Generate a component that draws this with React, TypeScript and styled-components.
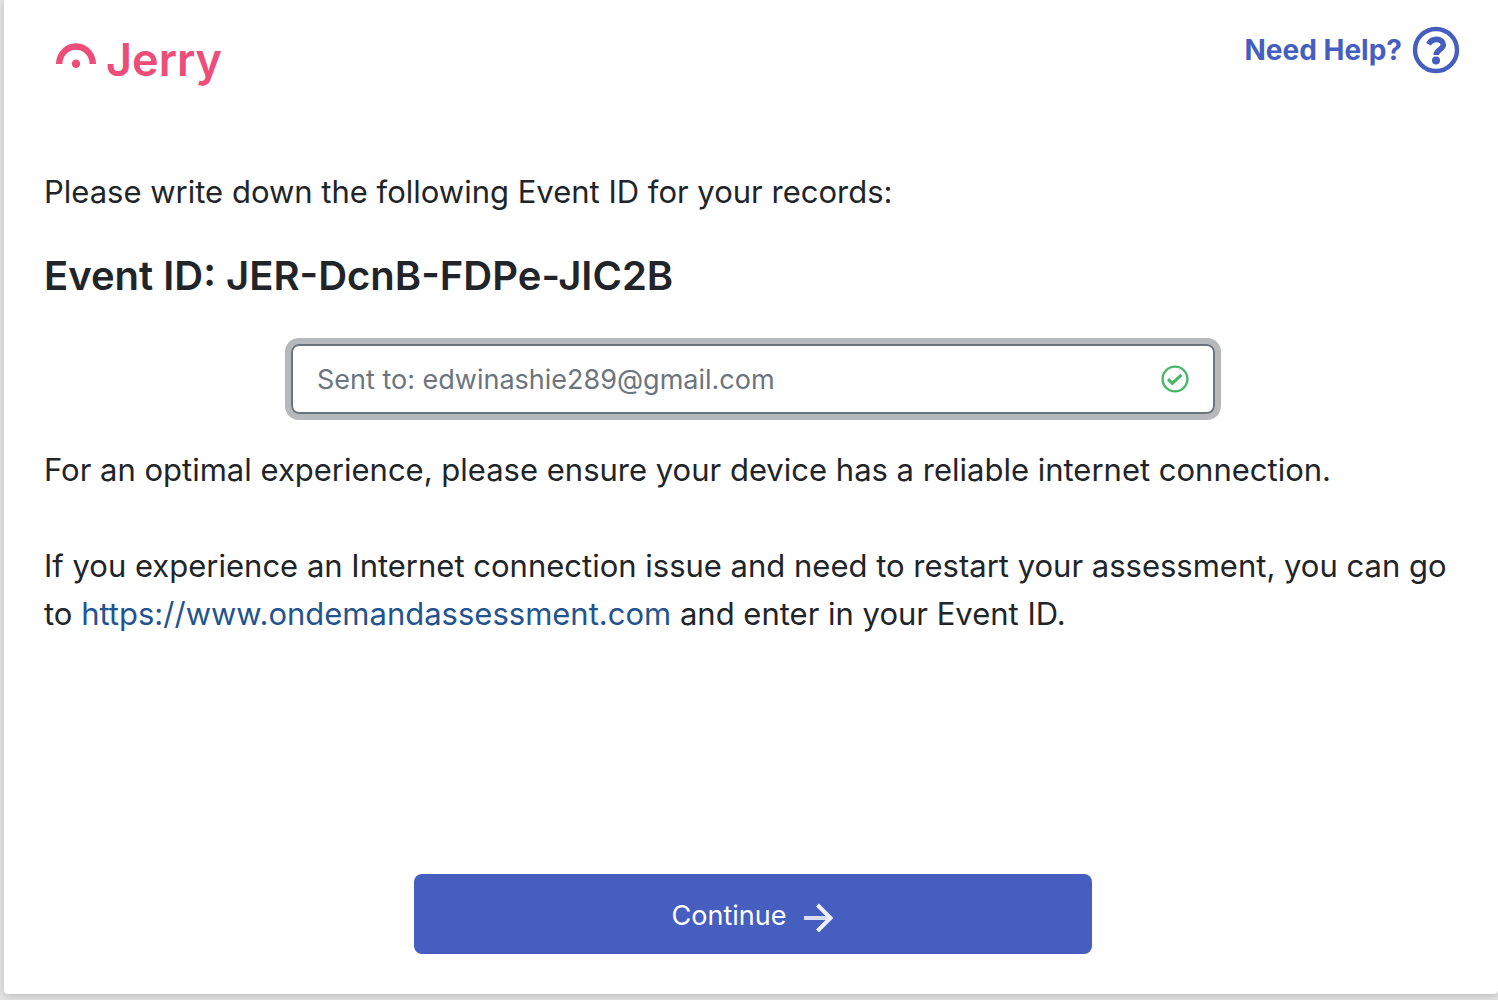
import React from "react";
import styled, { createGlobalStyle } from "styled-components";

const GlobalStyle = createGlobalStyle`
  *, *::before, *::after { box-sizing: border-box; }
  body {
    margin: 0;
    background: #e6e6e6;
    color: #212529;
    font-family: Inter, "Liberation Sans", sans-serif;
    font-size: 31px;
    line-height: 48px;
  }
`;

const Page = styled.div`
  display: flex;
  min-height: 100vh;
  padding: 0 0 6px 4px;
`;

const Card = styled.main`
  display: flex;
  flex: 1;
  flex-direction: column;
  min-width: 0;
  padding: 24px 36px 40px 40px;
  background: #fff;
  border-radius: 0 0 4px 4px;
  box-shadow: 0 2px 8px rgba(0, 0, 0, 0.2);
`;

const Header = styled.header`
  display: flex;
  align-items: flex-start;
  justify-content: space-between;
  margin-bottom: 84px;
`;

const Logo = styled.div`
  display: flex;
  align-items: center;
  gap: 10px;
  padding: 12px 12px 0;
  color: #ee4d7a;
  font-size: 45px;
  font-weight: 600;
  line-height: 48px;
`;

const HelpLink = styled.a`
  display: flex;
  align-items: center;
  gap: 8px;
  color: #465ec0;
  font-size: 28px;
  font-weight: 700;
  text-decoration: none;
`;

const Text = styled.p<{ $gap: number }>`
  margin: 0 0 ${(p) => p.$gap}px;
`;

const EventId = styled.h1`
  margin: 0 0 44px;
  font-size: 40px;
  font-weight: 600;
  line-height: 48px;
`;

const Field = styled.label`
  display: flex;
  align-items: center;
  align-self: center;
  width: 100%;
  max-width: 924px;
  height: 70px;
  margin-bottom: 32px;
  padding: 0 24px;
  border: 2px solid #6c757d;
  border-radius: 8px;
  box-shadow: 0 0 0 6px #b5b9bc;
`;

const FieldInput = styled.input`
  flex: 1;
  min-width: 0;
  padding: 2px 0 0;
  border: 0;
  outline: 0;
  background: transparent;
  color: #6c757d;
  font: inherit;
  font-size: 27px;
`;

const Link = styled.a`
  color: #22548f;
  text-decoration: none;
`;

const Continue = styled.button`
  display: flex;
  align-items: center;
  align-self: center;
  justify-content: center;
  gap: 16px;
  width: 100%;
  max-width: 678px;
  height: 80px;
  margin-top: auto;
  padding: 4px 0 0;
  border: 0;
  border-radius: 8px;
  background: #465ec0;
  color: #fff;
  font: inherit;
  font-size: 27px;
  cursor: pointer;
`;

export default function App() {
  return (
    <>
      <GlobalStyle />
      <Page>
        <Card>
          <Header>
            <Logo>
              <svg width="40" height="34" viewBox="0 0 40 34" fill="none" aria-hidden="true">
                <path d="M3.2 21a16.8 17.5 0 0 1 33.6 0" stroke="currentColor" strokeWidth="6.4" />
                <circle cx="20" cy="20.8" r="4.2" fill="currentColor" />
              </svg>
              <span>Jerry</span>
            </Logo>
            <HelpLink href="#help">
              Need Help?
              <svg width="52" height="52" viewBox="0 0 52 52" fill="none" aria-hidden="true">
                <circle cx="26" cy="26" r="21" stroke="currentColor" strokeWidth="4.4" />
                <path
                  d="M18.6 20.2C20.3 17 22.8 15.4 26.4 15.4C30.6 15.4 33.3 17.6 33.3 20.8C33.3 25.6 26.2 25.4 26.2 31"
                  stroke="currentColor"
                  strokeWidth="5.6"
                />
                <circle cx="26" cy="36.4" r="4" fill="currentColor" />
              </svg>
            </HelpLink>
          </Header>
          <Text $gap={36}>Please write down the following Event ID for your records:</Text>
          <EventId>Event ID: JER-DcnB-FDPe-JIC2B</EventId>
          <Field>
            <FieldInput aria-label="Email" defaultValue="Sent to: edwinashie289@gmail.com" />
            <svg width="28" height="28" viewBox="0 0 28 28" fill="none" stroke="#48b868" aria-hidden="true">
              <circle cx="14" cy="14" r="12.4" strokeWidth="2.4" />
              <path d="M7 14.2l4.3 4.2 9.2-8.6" strokeWidth="3.2" />
            </svg>
          </Field>
          <Text $gap={48}>
            For an optimal experience, please ensure your device has a reliable internet connection.
          </Text>
          <Text $gap={48}>
            If you experience an Internet connection issue and need to restart your assessment, you can go to{" "}
            <Link href="https://www.ondemandassessment.com">https://www.ondemandassessment.com</Link> and enter in
            your Event ID.
          </Text>
          <Continue type="button">
            Continue
            <svg width="32" height="32" viewBox="0 0 32 32" fill="none" aria-hidden="true">
              <path d="M2 18h26" stroke="#d9def3" strokeWidth="4" />
              <path d="M15.5 5L28.5 18 15.5 31" stroke="#eef0fa" strokeWidth="4" />
            </svg>
          </Continue>
        </Card>
      </Page>
    </>
  );
}
